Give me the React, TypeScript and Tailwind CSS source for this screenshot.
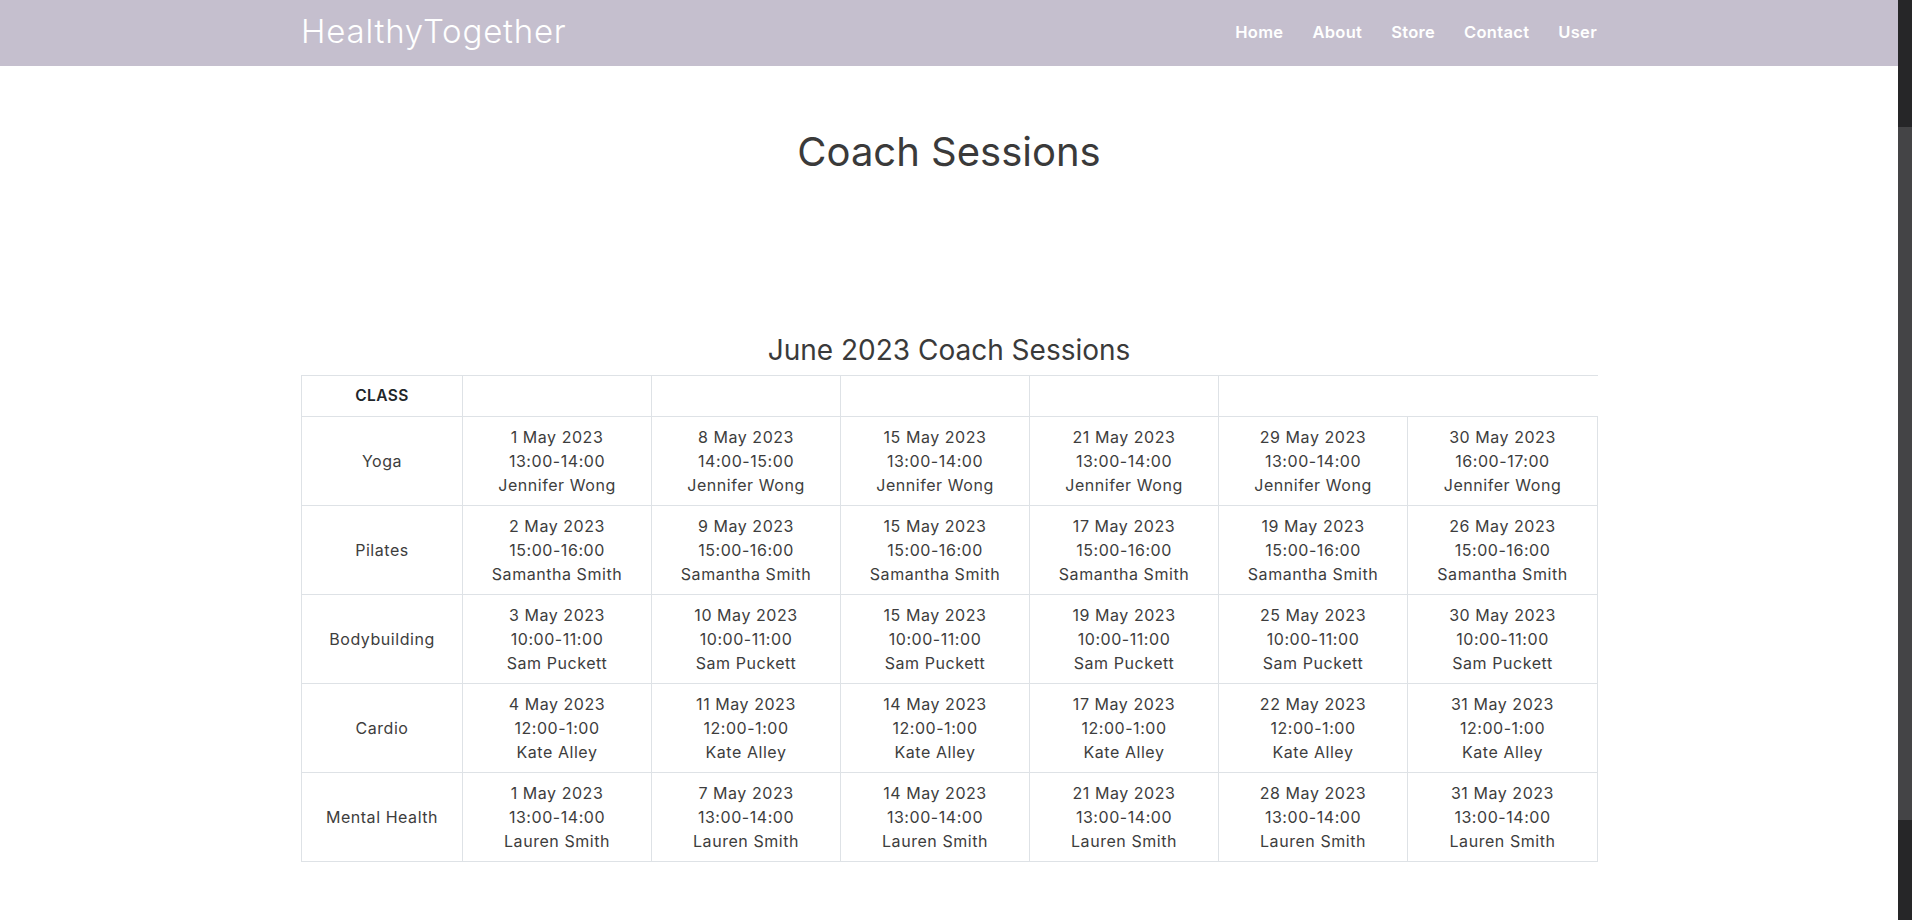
import React from "react";

type Session = { date: string; time: string; coach: string };
type Row = { cls: string; sessions: Session[] };

const mk = (days: string[], time: string, coach: string): Session[] =>
  days.map((d) => ({ date: `${d} May 2023`, time, coach }));

const rows: Row[] = [
  {
    cls: "Yoga",
    sessions: [
      { date: "1 May 2023", time: "13:00-14:00", coach: "Jennifer Wong" },
      { date: "8 May 2023", time: "14:00-15:00", coach: "Jennifer Wong" },
      { date: "15 May 2023", time: "13:00-14:00", coach: "Jennifer Wong" },
      { date: "21 May 2023", time: "13:00-14:00", coach: "Jennifer Wong" },
      { date: "29 May 2023", time: "13:00-14:00", coach: "Jennifer Wong" },
      { date: "30 May 2023", time: "16:00-17:00", coach: "Jennifer Wong" },
    ],
  },
  { cls: "Pilates", sessions: mk(["2", "9", "15", "17", "19", "26"], "15:00-16:00", "Samantha Smith") },
  { cls: "Bodybuilding", sessions: mk(["3", "10", "15", "19", "25", "30"], "10:00-11:00", "Sam Puckett") },
  { cls: "Cardio", sessions: mk(["4", "11", "14", "17", "22", "31"], "12:00-1:00", "Kate Alley") },
  { cls: "Mental Health", sessions: mk(["1", "7", "14", "21", "28", "31"], "13:00-14:00", "Lauren Smith") },
];

const font = { fontFamily: "Inter, 'Open Sans', sans-serif" };

export default function App() {
  return (
    <div className="flex h-[920px] w-[1912px] overflow-hidden bg-white" style={font}>
      <div className="flex min-w-0 flex-1 flex-col">
        <nav className="h-[66px] w-full bg-[#c5bfce]">
          <div className="mx-auto flex h-full w-[1296px] items-center justify-between">
            <span className="-mt-[3px] text-[33px] font-light leading-none tracking-[0.8px] text-white">HealthyTogether</span>
            <ul className="-mt-[2px] flex items-center gap-[29px] text-[16.5px] font-semibold tracking-[0.3px] text-white">
              <li>Home</li>
              <li>About</li>
              <li>Store</li>
              <li>Contact</li>
              <li>User</li>
            </ul>
          </div>
        </nav>

        <main className="mx-auto w-[1296px]">
          <h1 className="mt-[62px] text-center text-[40px] font-normal leading-[48px] text-[#3a3a3a]">Coach Sessions</h1>
          <h2 className="mt-[157px] mb-[8px] text-center text-[28px] font-normal leading-[34px] text-[#3a3a3a]">
            June 2023 Coach Sessions
          </h2>
          <table className="w-[1296px] table-fixed border-collapse text-center text-[16px] leading-6 tracking-[0.55px] text-[#3d3d3d]">
            <colgroup>
              <col className="w-[161px]" />
              <col className="w-[189px]" />
              <col className="w-[189px]" />
              <col className="w-[189px]" />
              <col className="w-[189px]" />
              <col className="w-[189px]" />
              <col className="w-[190px]" />
            </colgroup>
            <thead>
              <tr>
                <th className="border border-[#dee2e6] p-2 text-[15.5px] font-semibold tracking-[0.4px] text-[#212529]">CLASS</th>
                <th className="border border-[#dee2e6] p-2"></th>
                <th className="border border-[#dee2e6] p-2"></th>
                <th className="border border-[#dee2e6] p-2"></th>
                <th className="border border-[#dee2e6] p-2"></th>
                <th colSpan={2} className="border-y border-r-0 border-[#dee2e6] p-2"></th>
              </tr>
            </thead>
            <tbody>
              {rows.map((r) => (
                <tr key={r.cls}>
                  <td className="border border-[#dee2e6] p-2 align-middle">{r.cls}</td>
                  {r.sessions.map((s, i) => (
                    <td key={i} className="border border-[#dee2e6] p-2 align-middle">
                      <div>{s.date}</div>
                      <div>{s.time}</div>
                      <div>{s.coach}</div>
                    </td>
                  ))}
                </tr>
              ))}
            </tbody>
          </table>
        </main>
      </div>

      <aside className="flex h-full w-[14px] shrink-0 flex-col bg-[#262628]">
        <div className="h-[127px] rounded-tr-[3px]" />
        <div className="h-[693px] bg-[#444446]" />
        <div className="flex-1" />
      </aside>
    </div>
  );
}
